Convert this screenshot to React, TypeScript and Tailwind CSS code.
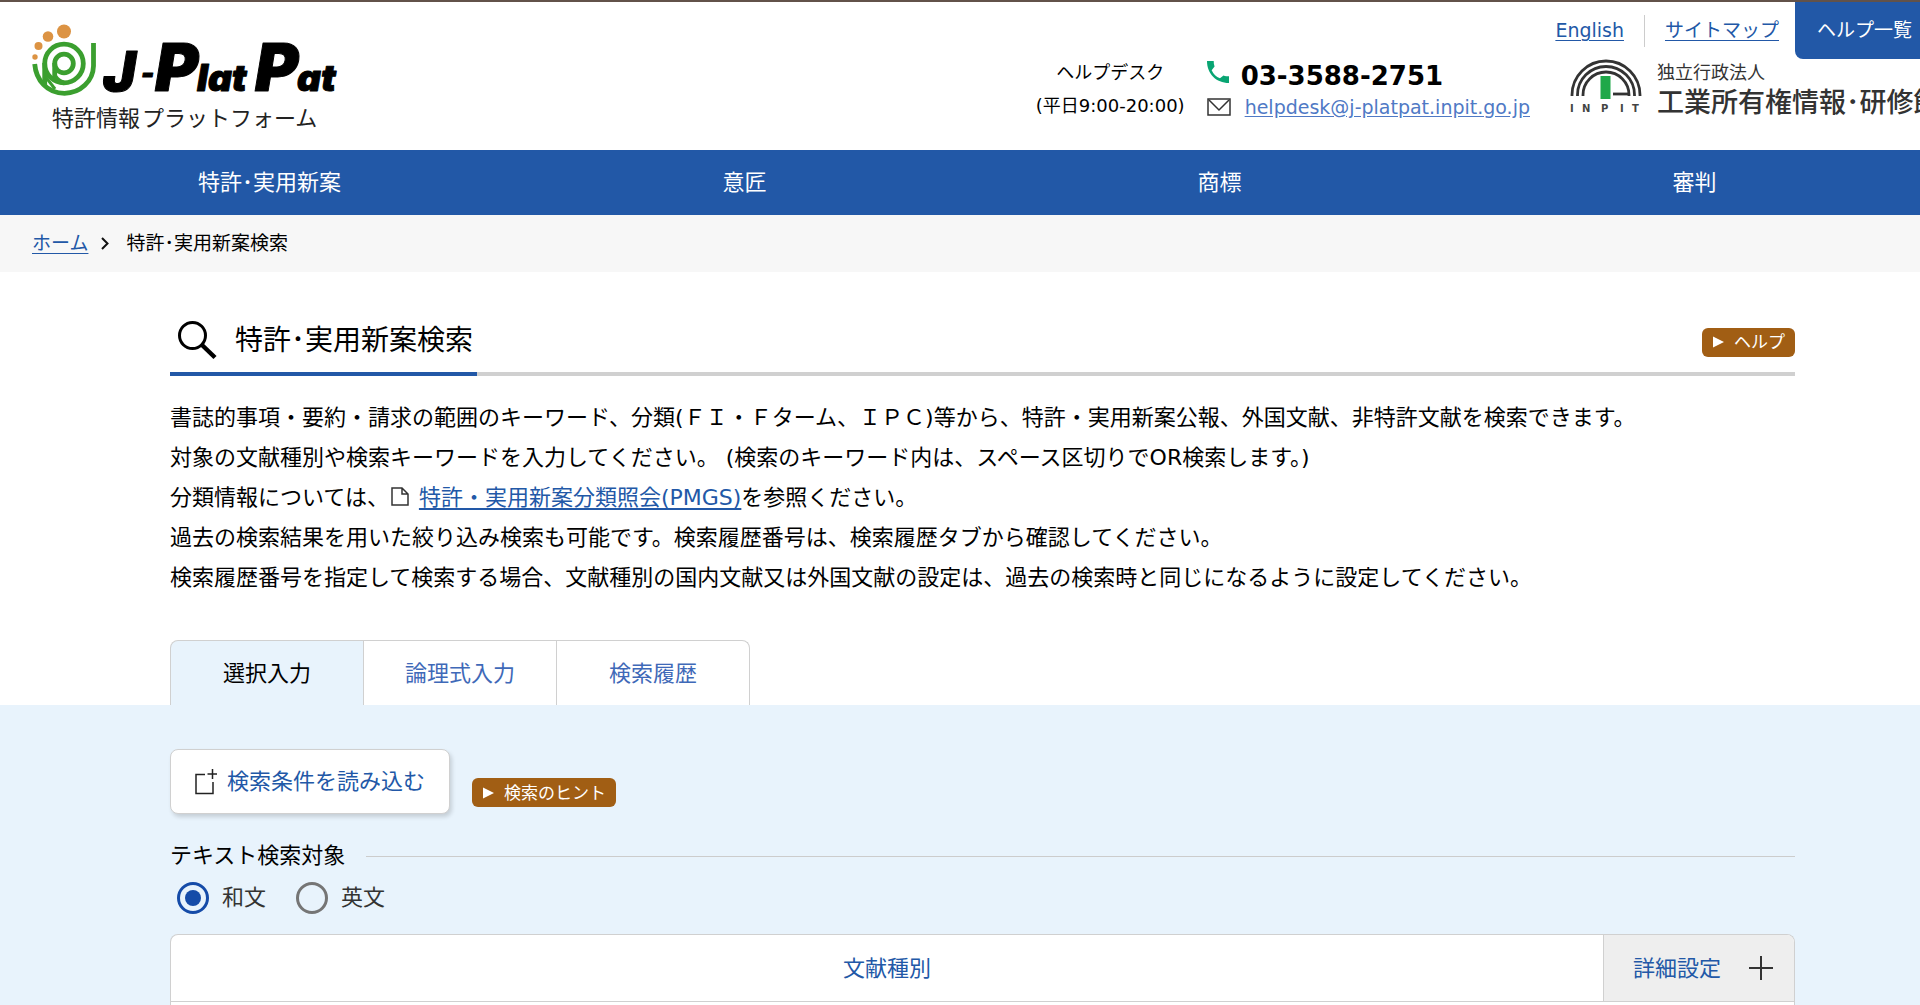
import { useState } from "react";
import type { ReactNode } from "react";

const NAV_ITEMS = ["特許･実用新案", "意匠", "商標", "審判"];

const TABS = [
  { id: "select", label: "選択入力" },
  { id: "logic", label: "論理式入力" },
  { id: "history", label: "検索履歴" },
];

const LANGUAGES = [
  { id: "ja", label: "和文" },
  { id: "en", label: "英文" },
];

function BrandLogo() {
  return (
    <svg width="310" height="110" viewBox="30 22 310 110" role="img" aria-label="J-PlatPat">
      <g fill="#dc9343">
        <circle cx="64" cy="31.500" r="7" />
        <circle cx="48" cy="36.500" r="5.300" />
        <circle cx="38.500" cy="46" r="4" />
        <circle cx="35" cy="57" r="2.700" />
      </g>
      <g fill="none" stroke="#3b9f2f" strokeWidth="4.800">
        <path d="M93.500 43V66A29 28 0 0 1 64.500 93.300C47 93.300 36 80 34.700 64" />
        <circle cx="64" cy="63.500" r="9.300" />
        <circle cx="64" cy="63.500" r="19.300" />
        <path d="M54.700 63V76C57 80 60 82 64 82.800" />
        <path d="M44.700 63V85" />
        <path d="M45 76L55 89" strokeWidth="3" />
      </g>
      <text
        y="91"
        fill="#000"
        stroke="#000"
        strokeLinejoin="round"
        fontFamily="Inter, sans-serif"
        fontWeight="900"
        fontStyle="italic"
      >
        <tspan x="103" fontSize="55">J</tspan>
        <tspan x="141" y="83" fontSize="28">-</tspan>
        <tspan x="155" y="91" fontSize="66">P</tspan>
        <tspan x="197" fontSize="37">lat</tspan>
        <tspan x="255" fontSize="66">P</tspan>
        <tspan x="297" fontSize="37">at</tspan>
      </text>
      <g fill="#222" fontFamily="'Noto Sans CJK JP', sans-serif" fontSize="22">
        <text x="52" y="126">特許情報</text>
        <text x="142" y="126">プラットフォーム</text>
      </g>
    </svg>
  );
}

function InpitMark() {
  return (
    <svg width="72" height="56" viewBox="0 0 72 56" role="img" aria-label="INPIT" className="shrink-0">
      <g fill="none" stroke="#333" strokeWidth="2.800">
        <path d="M2 37V36A34 34 0 0 1 70 36V37" />
        <path d="M7.500 37V36A28.500 28.500 0 0 1 64.500 36V37" />
        <path d="M13 37V36A23 23 0 0 1 59 36V37" />
        <path d="M43 35H58" />
      </g>
      <rect x="30.500" y="17" width="10" height="23" fill="#1fa849" />
      <text
        x="0 12 31 50 62"
        y="53"
        fill="#444"
        fontFamily="'DejaVu Sans', sans-serif"
        fontSize="10"
        fontWeight="700"
      >
        INPIT
      </text>
    </svg>
  );
}

function Header() {
  return (
    <header className="flex justify-between overflow-hidden border-t-2 border-[#62524a] bg-white pb-[18px]">
      <a href="#home" className="mt-5 ml-[30px] block shrink-0">
        <BrandLogo />
      </a>
      <div className="flex flex-col items-end">
        <div className="flex h-[57px] items-stretch text-[19px] text-[#2258a7]">
          <a href="#english" className="self-center underline underline-offset-3">English</a>
          <span className="mx-5 h-8 w-px self-center bg-[#ccc]" />
          <a href="#sitemap" className="mr-4 self-center underline underline-offset-3">サイトマップ</a>
          <a
            href="#help-list"
            className="flex w-[125px] items-center rounded-bl-lg bg-[#2258a7] pl-[22px] text-white"
          >
            ヘルプ一覧
          </a>
        </div>
        <div className="flex items-start">
          <dl className="grid grid-cols-[auto_auto] items-center gap-x-[22px]">
            <dt className="-mt-1 row-span-2 text-center text-lg leading-[33px] text-black">
              ヘルプデスク
              <br />
              (平日9:00-20:00)
            </dt>
            <dd className="flex h-[33px] items-center gap-3">
              <svg width="22" height="22" viewBox="3 3 18 18" fill="#09a573" className="-mt-2 shrink-0" aria-hidden="true">
                <path d="M8.500 3C8.500 4.500 8.600 6 9.200 7.500L6.800 10.500C8.300 13.700 10.500 15.900 13.600 17.200L16.500 14.800C18 15.400 19.500 15.500 21 15.500V21C10.500 21 3 13.500 3 3Z" />
              </svg>
              <span className="text-[26px] leading-8 font-bold text-black">03-3588-2751</span>
            </dd>
            <dd className="flex h-[30px] items-center gap-[14px]">
              <svg width="24" height="18" viewBox="0 0 24 18" fill="none" stroke="#333" strokeWidth="1.500" className="shrink-0" aria-hidden="true">
                <rect x="1" y="1" width="22" height="16" />
                <path d="M2 2L12 12L22 2" />
              </svg>
              <a href="mailto:helpdesk@j-platpat.inpit.go.jp" className="text-[19px] text-[#4f79c5] underline underline-offset-2">
                helpdesk@j-platpat.inpit.go.jp
              </a>
            </dd>
          </dl>
          <a href="#inpit" className="ml-10 flex w-[350px] gap-[15px] overflow-hidden whitespace-nowrap text-[#333]">
            <InpitMark />
            <span className="flex flex-col">
              <span className="text-lg leading-7">独立行政法人</span>
              <span className="text-[27px] leading-8 font-medium">工業所有権情報･研修館</span>
            </span>
          </a>
        </div>
      </div>
    </header>
  );
}

function HintButton({ children }: { children: ReactNode }) {
  return (
    <button
      type="button"
      className="flex h-[29px] items-center gap-[10px] rounded-md bg-[#a15e14] px-[10px] text-[17px] leading-6 text-white"
    >
      <svg width="12" height="12" viewBox="0 0 12 12" fill="currentColor" aria-hidden="true">
        <path d="M1 0.500L12 6L1 11.500Z" />
      </svg>
      {children}
    </button>
  );
}

function Description() {
  return (
    <div className="mt-[22px] text-[22px] leading-10 text-black">
      <p>書誌的事項・要約・請求の範囲のキーワード、分類(ＦＩ・Ｆターム、ＩＰＣ)等から、特許・実用新案公報、外国文献、非特許文献を検索できます。</p>
      <p>対象の文献種別や検索キーワードを入力してください。 (検索のキーワード内は、スペース区切りでOR検索します。)</p>
      <p>
        分類情報については、
        <svg width="18" height="22" viewBox="0 0 18 22" fill="none" stroke="#333" strokeWidth="1.500" className="mr-[10px] ml-0.5 inline-block align-[-4px]" aria-hidden="true">
          <path d="M1 1H11L17 7V18H1ZM11 1V7H17" />
        </svg>
        <a href="#pmgs" className="text-[#2258a7] underline underline-offset-3">特許・実用新案分類照会(PMGS)</a>
        を参照ください。
      </p>
      <p>過去の検索結果を用いた絞り込み検索も可能です。検索履歴番号は、検索履歴タブから確認してください。</p>
      <p>検索履歴番号を指定して検索する場合、文献種別の国内文献又は外国文献の設定は、過去の検索時と同じになるように設定してください。</p>
    </div>
  );
}

function App() {
  const [tab, setTab] = useState("select");
  const [language, setLanguage] = useState("ja");

  return (
    <div className="flex min-h-screen flex-col bg-white font-['DejaVu_Sans','Noto_Sans_CJK_JP',sans-serif] text-black">
      <Header />

      <nav className="overflow-hidden bg-[#2258a7] pl-8">
        <ul className="-mr-3 grid grid-cols-4">
          {NAV_ITEMS.map((item) => (
            <li key={item}>
              <a href="#nav" className="block py-4 text-center text-[22px] leading-[33px] text-white">
                {item}
              </a>
            </li>
          ))}
        </ul>
      </nav>

      <div className="flex items-center bg-[#f7f7f7] px-8 py-[14px] text-[19px] leading-[29px]">
        <a href="#home" className="text-[#2258a7] underline underline-offset-3">ホーム</a>
        <svg width="8" height="13" viewBox="0 0 8 13" fill="none" stroke="#111" strokeWidth="2" className="mr-[17px] ml-[13px]" aria-hidden="true">
          <path d="M1 1L6.500 6.500L1 12" />
        </svg>
        <span>特許･実用新案検索</span>
      </div>

      <main className="flex flex-1 flex-col">
        <div className="mr-[125px] ml-[170px] pt-10">
          <div className="flex items-center justify-between border-b-4 border-[#d0d0d0]">
            <h1 className="-mb-1 flex items-center gap-[18px] border-b-4 border-[#2258a7] pt-1 pr-1 pb-[6px] pl-[7px] text-[28px] leading-[50px]">
              <svg width="40" height="40" viewBox="0 1 40 40" fill="none" stroke="#000" aria-hidden="true">
                <circle cx="15.500" cy="15.500" r="13" strokeWidth="3" />
                <path d="M25 25L38 37.500" strokeWidth="4.500" />
              </svg>
              特許･実用新案検索
            </h1>
            <HintButton>ヘルプ</HintButton>
          </div>

          <Description />

          <div role="tablist" className="mt-[42px] flex">
            {TABS.map((item) => (
              <button
                key={item.id}
                type="button"
                role="tab"
                aria-selected={tab === item.id}
                onClick={() => setTab(item.id)}
                className="-ml-px h-[65px] w-[194px] border border-b-0 border-[#d0d0d0] text-[22px] text-[#3f69b8] first:ml-0 first:rounded-tl-lg last:rounded-tr-lg aria-selected:bg-[#e8f3fc] aria-selected:text-black"
              >
                {item.label}
              </button>
            ))}
          </div>
        </div>

        <form className="flex flex-1 flex-col bg-[#e8f3fc] pt-11 pr-[125px] pl-[170px]">
          <div className="flex items-end gap-[22px]">
            <button
              type="button"
              className="flex h-[65px] w-[280px] items-center justify-center gap-[10px] rounded-lg border border-[#d0d0d0] bg-white text-[22px] text-[#2258a7] shadow-[2px_3px_4px_rgba(0,0,0,0.15)]"
            >
              <svg width="22" height="26" viewBox="0 0 22 26" fill="none" stroke="#222" strokeWidth="1.500" aria-hidden="true">
                <path d="M10 5.500H1V24.500H18V13M17.500 0V10M12.500 5H22" />
              </svg>
              検索条件を読み込む
            </button>
            <div className="mb-[7px]">
              <HintButton>検索のヒント</HintButton>
            </div>
          </div>

          <fieldset className="mt-6">
            <legend className="flex w-full items-center gap-[21px] text-[22px] leading-9">
              テキスト検索対象
              <span className="h-px flex-1 bg-[#ccc]" />
            </legend>
            <div className="mt-2 flex gap-[30px] pl-[7px]">
              {LANGUAGES.map((item) => (
                <label key={item.id} className="flex items-center gap-[13px] text-[22px] leading-8 text-[#333]">
                  <input
                    type="radio"
                    name="language"
                    checked={language === item.id}
                    onChange={() => setLanguage(item.id)}
                    className="size-8 appearance-none rounded-full border-3 border-[#757575] bg-clip-content p-[5px] checked:border-[#154ba8] checked:bg-[#154ba8]"
                  />
                  {item.label}
                </label>
              ))}
            </div>
          </fieldset>

          <div className="mt-5 flex flex-1 flex-col overflow-hidden rounded-t-lg border border-b-0 border-[#d0d0d0] bg-white">
            <div className="flex h-[67px] border-b border-[#d0d0d0] text-[22px] text-[#2258a7]">
              <button type="button" className="flex-1">文献種別</button>
              <button type="button" className="flex w-[191px] items-center justify-center gap-7 border-l border-[#d0d0d0] bg-[#eee] pl-2">
                詳細設定
                <svg width="24" height="24" viewBox="0 0 24 24" fill="none" stroke="#333" strokeWidth="2" aria-hidden="true">
                  <path d="M12 0V24M0 12H24" />
                </svg>
              </button>
            </div>
          </div>
        </form>
      </main>
    </div>
  );
}

export default App;
